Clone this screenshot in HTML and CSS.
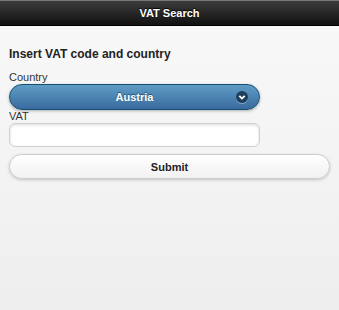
FILE: index.html
```html
<!DOCTYPE html>
<html lang="en">
<head>
    <meta charset="UTF-8">
    <meta name="viewport" content="width=device-width, initial-scale=1.0">
    <title>VAT Search</title>
    <link rel="stylesheet" href="styles.css">
</head>
<body>
    <div class="header">
        <h1>VAT Search</h1>
    </div>
    <div class="content">
        <h3>Insert VAT code and country</h3>
        <form class="vat-form">
            <label for="country">Country</label>
            <div class="select-btn">
                <span class="select-text">Austria</span>
                <span class="select-icon">
                    <svg width="12" height="12" viewBox="0 0 12 12">
                        <circle cx="6" cy="6" r="6" fill="#1f3e5c"/>
                        <path d="M3.3 4.9 L6 7.6 L8.7 4.9" fill="none" stroke="#fff" stroke-width="1.8"/>
                    </svg>
                </span>
            </div>
            <label for="vat">VAT</label>
            <input type="text" id="vat" class="text-input">
            <button type="button" class="submit-btn">Submit</button>
        </form>
    </div>
</body>
</html>
```

FILE: styles.css
```css
html, body {
    margin: 0;
    padding: 0;
    height: 100%;
}

body {
    font-family: 'Liberation Sans', Arial, sans-serif;
    background: linear-gradient(#f9f9f9, #eeeeee);
    color: #222;
}

.header {
    height: 26px;
    background: linear-gradient(#3c3c3c, #111111);
    border-top: 1px solid #777;
    border-bottom: 1px solid #000;
    box-sizing: border-box;
    display: flex;
    align-items: center;
    justify-content: center;
}

.header h1 {
    margin: 0;
    font-size: 11px;
    font-weight: bold;
    color: #fff;
    text-shadow: 0 -1px 1px #000;
}

.content {
    padding: 0 9px;
}

.content h3 {
    margin: 0;
    padding-top: 21px;
    font-size: 12px;
    font-weight: bold;
    line-height: 15px;
    color: #222;
}

.vat-form {
    display: flex;
    flex-direction: column;
    align-items: flex-start;
    margin-top: 9px;
}

.vat-form label {
    font-size: 11px;
    line-height: 13px;
    color: #333;
}

.select-btn {
    width: 251px;
    height: 26px;
    box-sizing: border-box;
    border: 1px solid #145072;
    border-radius: 13px;
    background: linear-gradient(#5f9cc5, #396b9e);
    box-shadow: 0 1px 3px rgba(0,0,0,0.3);
    display: flex;
    align-items: center;
    position: relative;
}

.select-text {
    flex: 1;
    text-align: center;
    font-size: 11px;
    font-weight: bold;
    color: #fff;
    text-shadow: 0 -1px 1px #145072;
}

.select-icon {
    position: absolute;
    right: 11px;
    top: 6px;
    width: 12px;
    height: 12px;
    border-radius: 6px;
    box-shadow: 0 1px 0 rgba(255,255,255,0.4);
}

.select-icon svg {
    display: block;
}

.text-input {
    width: 251px;
    height: 24px;
    box-sizing: border-box;
    border: 1px solid #d0d0d0;
    border-radius: 6px;
    background: #fff;
    box-shadow: inset 0 1px 3px rgba(0,0,0,0.15);
    margin: 0;
    outline: none;
}

.submit-btn {
    width: 321px;
    height: 25px;
    margin-top: 7px;
    box-sizing: border-box;
    border: 1px solid #cccccc;
    border-radius: 13px;
    background: linear-gradient(#ffffff, #f1f1f1);
    box-shadow: 0 1px 3px rgba(0,0,0,0.2);
    font-family: 'Liberation Sans', Arial, sans-serif;
    font-size: 11px;
    font-weight: bold;
    color: #222;
    cursor: pointer;
}
```
